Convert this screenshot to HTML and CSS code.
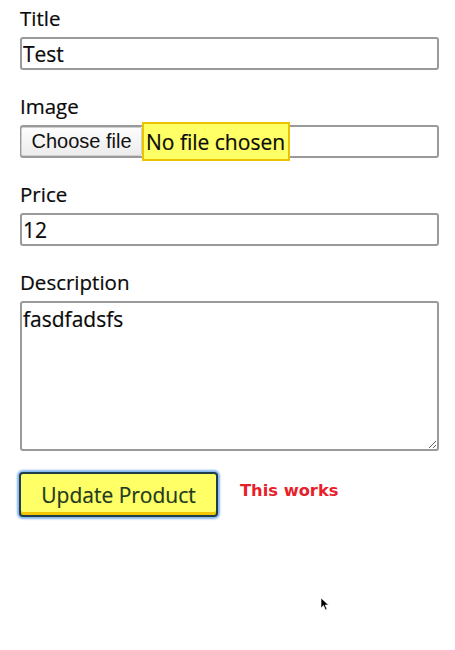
FILE: index.html
```html
<!DOCTYPE html>
<html>
<head>
<meta charset="utf-8">
<link rel="stylesheet" href="styles.css">
</head>
<body>
<form class="form">
  <div class="field">
    <label class="label">Title</label>
    <input class="input" type="text" value="Test">
  </div>
  <div class="field">
    <label class="label">Image</label>
    <div class="file">
      <span class="file-btn">Choose file</span>
      <span class="file-name">No file chosen</span>
    </div>
  </div>
  <div class="field">
    <label class="label">Price</label>
    <input class="input" type="text" value="12">
  </div>
  <div class="field">
    <label class="label">Description</label>
    <textarea class="textarea">fasdfadsfs</textarea>
  </div>
  <div class="actions">
    <button type="button" class="submit">Update Product</button>
    <span class="note">This works</span>
  </div>
</form>
<svg class="cursor" width="10" height="14" viewBox="0 0 10 14"><path d="M1 1 L1 11 L3.5 8.5 L5.5 13 L7 12.3 L5.2 8 L8.5 8 Z" fill="#000" stroke="#fff" stroke-width="0.6"/></svg>
</body>
</html>
```
FILE: styles.css
```css
html, body {
  margin: 0;
  padding: 0;
  background: #fff;
}
body {
  font-family: "Open Sans", sans-serif;
  color: #111;
  position: relative;
  min-height: 650px;
}
.form {
  display: flex;
  flex-direction: column;
  padding: 4px 0 0 20px;
  width: 419px;
}
.field {
  display: flex;
  flex-direction: column;
  margin-bottom: 22px;
}
.label {
  font-size: 20.5px;
  line-height: 28px;
  margin-bottom: 5px;
  color: #0a0a0a;
  -webkit-text-stroke: 0.2px #0a0a0a;
}
.input {
  box-sizing: border-box;
  height: 33px;
  width: 100%;
  margin: 0;
  border: 2px solid #9a9a9a;
  border-radius: 3px;
  padding: 0 1px;
  font-family: "Open Sans", sans-serif;
  font-size: 21px;
  color: #0a0a0a;
  -webkit-text-stroke: 0.2px #0a0a0a;
  background: #fff;
  outline: none;
}
.file {
  box-sizing: border-box;
  height: 33px;
  border: 2px solid #9a9a9a;
  border-radius: 3px;
  display: flex;
  align-items: stretch;
}
.file-btn {
  box-sizing: border-box;
  width: 121px;
  margin-left: -1px;
  display: flex;
  align-items: center;
  justify-content: center;
  font-family: "Liberation Sans", Arial, sans-serif;
  font-size: 20px;
  color: #111;
  background: linear-gradient(#fdfdfd, #ececec);
  border: 1px solid #cfcfcf;
  border-radius: 2px;
}
.file-name {
  box-sizing: border-box;
  margin: -5px 0 -5px 0;
  padding: 0 3px 0 2px;
  display: flex;
  align-items: center;
  background: #ffff66;
  border: 2px solid #ecc300;
  font-size: 21px;
  color: #0a0a0a;
  -webkit-text-stroke: 0.2px #0a0a0a;
}
.textarea {
  box-sizing: border-box;
  height: 150px;
  width: 100%;
  margin: 0;
  border: 2px solid #9a9a9a;
  border-radius: 3px;
  padding: 2px 1px;
  font-family: "Open Sans", sans-serif;
  font-size: 21px;
  line-height: 28px;
  color: #0a0a0a;
  -webkit-text-stroke: 0.2px #0a0a0a;
  resize: both;
  outline: none;
}
.actions {
  display: flex;
  align-items: center;
  margin-top: -1px;
}
.submit {
  box-sizing: border-box;
  width: 199px;
  height: 45px;
  margin-left: -1px;
  background: #ffff66;
  border: 2px solid #1e3f4a;
  border-radius: 4px;
  box-shadow: inset 0 -3px 0 #f2c600, 0 0 2px 2px #86b6ee;
  font-family: "Open Sans", sans-serif;
  font-size: 21px;
  color: #1d3a20;
  -webkit-text-stroke: 0.2px #1d3a20;
  padding: 0;
  cursor: pointer;
}
.note {
  margin-left: 22px;
  margin-top: -8px;
  font-family: "DejaVu Sans", Verdana, sans-serif;
  font-weight: bold;
  font-size: 16.3px;
  color: #e8202a;
}
.cursor {
  position: absolute;
  left: 320px;
  top: 597px;
}
```
